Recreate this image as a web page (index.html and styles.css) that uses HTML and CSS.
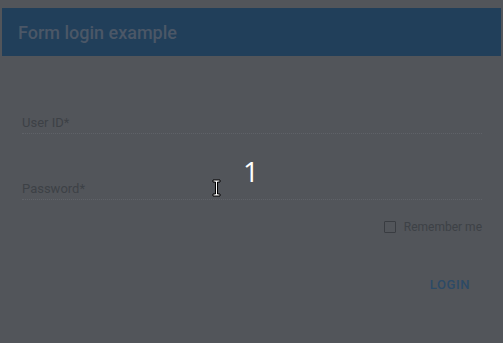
FILE: index.html
```html
<!DOCTYPE html>
<html>
<head>
<meta charset="utf-8">
<link rel="stylesheet" href="styles.css">
</head>
<body>
<div class="card">
  <header class="bar"><h1 class="title">Form login example</h1></header>
  <form class="form">
    <div class="field field-first"><span class="label">User ID*</span></div>
    <div class="field"><span class="label">Password*</span></div>
    <div class="remember"><span class="box"></span><span class="rem-text">Remember me</span></div>
    <div class="actions"><span class="login">LOGIN</span></div>
  </form>
</div>
<div class="count">1</div>
<svg class="cursor" width="9" height="18" viewBox="0 0 9 18">
  <path d="M1 1h7v2H5.5v12H8v2H1v-2h2.5V3H1z" fill="#fff" stroke="#000" stroke-width="1"/>
</svg>
</body>
</html>
```
FILE: styles.css
```css
html, body { margin: 0; padding: 0; }
body {
  width: 503px;
  height: 343px;
  background: #52555a;
  font-family: Roboto, "Noto Sans", sans-serif;
  position: relative;
  overflow: hidden;
}
.card {
  margin: 8px 2px 0 2px;
}
.bar {
  height: 48px;
  background: #213f5a;
  display: flex;
  align-items: center;
  padding-left: 16px;
}
.title {
  margin: 0;
  font-size: 18px;
  font-weight: 500;
  color: #4b5767;
  position: relative;
  top: 0;
}
.form {
  display: flex;
  flex-direction: column;
  padding: 0 19px 0 20px;
}
.field {
  height: 30px;
  border-bottom: 1px dotted #5f6268;
  display: flex;
  align-items: flex-end;
  padding-bottom: 3px;
  box-sizing: border-box;
  margin-top: 36px;
}
.field-first { margin-top: 48px; }
.label {
  font-size: 13px;
  color: #3d4146;
  line-height: 15px;
}
.remember {
  display: flex;
  align-items: center;
  justify-content: flex-end;
  margin-top: 20px;
  gap: 8px;
}
.box {
  width: 10px;
  height: 10px;
  border: 1.5px solid #393c41;
  border-radius: 1px;
}
.rem-text {
  font-size: 12px;
  color: #3d4146;
}
.actions {
  display: flex;
  justify-content: flex-end;
  margin-top: 43px;
  padding-right: 12px;
}
.login {
  font-size: 13px;
  font-weight: 500;
  color: #2c4a66;
  letter-spacing: 0.6px;
}
.count {
  position: absolute;
  left: 243px;
  top: 152px;
  font-family: "Open Sans", sans-serif;
  font-size: 28px;
  color: #ffffff;
  line-height: 38px;
}
.cursor {
  position: absolute;
  left: 212px;
  top: 179px;
}
```
